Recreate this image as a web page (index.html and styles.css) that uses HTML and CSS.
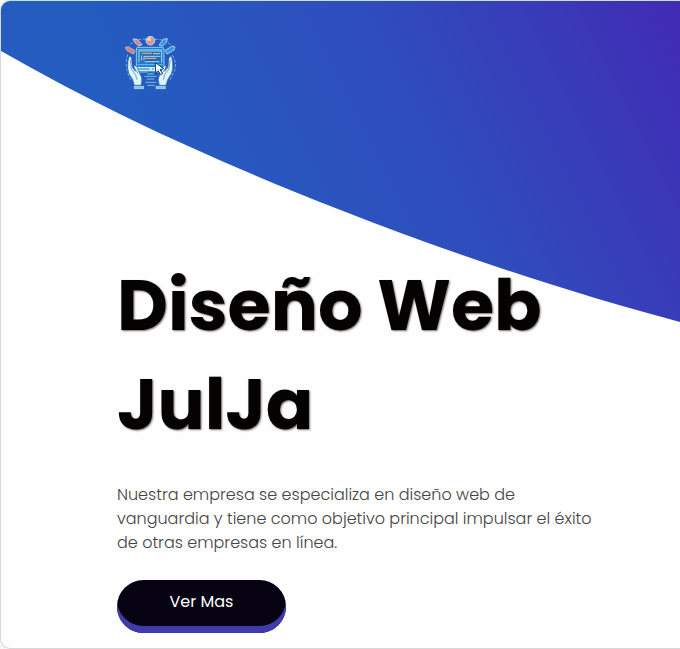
FILE: index.html
```html
<!DOCTYPE html>
<html lang="es">
<head>
<meta charset="utf-8">
<meta name="viewport" content="width=device-width, initial-scale=1">
<title>Diseño Web JulJa</title>
<link rel="stylesheet" href="styles.css">
</head>
<body>
<div class="page">
  <svg class="wave" viewBox="0 0 680 324" preserveAspectRatio="none" aria-hidden="true">
    <defs>
      <linearGradient id="sky" gradientUnits="userSpaceOnUse" x1="200" y1="240" x2="680" y2="0">
        <stop offset="0" stop-color="#245cc0"/>
        <stop offset="0.5" stop-color="#304bbc"/>
        <stop offset="1" stop-color="#412bb4"/>
      </linearGradient>
    </defs>
    <path fill="url(#sky)" d="M0 0H680V321C575 293 460 256 340 209C220 162 110 113 0 50Z"/>
  </svg>
  <header class="header">
    <a class="logo" href="#" aria-label="JulJa">
      <svg viewBox="42 33 156 162" aria-hidden="true">
        <g fill="none" stroke="#72b9e8" stroke-width="3" stroke-dasharray="9 5">
          <path d="M61 58Q86 38 108 43M134 43Q164 42 184 61M53 89Q44 113 54 146L62 164M187 91Q204 119 190 144L180 164"/>
        </g>
        <path fill="#d97b69" stroke="#cfdcea" stroke-width="2" d="M46 67L55 65L75 77L70 87L50 76Z"/>
        <path fill="#c98585" stroke="#bcdcf0" stroke-width="3" d="M69 42L82 43L96 59L86 63L75 53Z"/>
        <path fill="#3696df" stroke="#a5d5ef" stroke-width="3" d="M147 60L161 42L172 41L169 52L157 64ZM166 76L187 63L195 66L192 75L171 87Z"/>
        <circle cx="121" cy="47" r="13" fill="#dd9483" stroke="#b9dcf2" stroke-width="3"/>
        <path fill="#f7d4c4" d="M111 46Q113 36 123 37L121 49Z"/>
        <rect x="79" y="67" width="83" height="74" rx="5" fill="#267bc8" stroke="#8ccbee" stroke-width="3"/>
        <path stroke="#58b9ed" stroke-width="4" d="M82 74H159"/>
        <path fill="#2468b3" d="M90 79H151V110H90Z"/>
        <path fill="none" stroke="#a2def7" stroke-width="3" d="M87 112V78H155V113M95 91V107M102 106V94H151M104 110H148"/>
        <path stroke="#e0a57f" stroke-width="4" d="M95 85H126M105 100H139"/>
        <path stroke="#d9d4c8" stroke-width="3" d="M129 86H150"/>
        <path stroke="#51b9ef" stroke-width="4" d="M82 119H158"/>
        <path fill="#c9effc" d="M81 126H137V138H81Z"/>
        <path stroke="#266cb4" stroke-width="3" d="M84 132H119M126 132H131"/>
        <path fill="#48a7df" stroke="#123c88" stroke-width="2" d="M114 142H131L136 151H107Z"/>
        <path stroke="#7fc0e8" stroke-width="3" d="M103 154H140M110 162H133M106 172H139M112 181H134"/>
        <path fill="#dff5fc" stroke="#225e9e" stroke-width="2" d="M57 96Q63 89 65 102L67 126L76 139L71 123Q78 118 82 129L91 149Q99 160 93 181H73L68 164L56 145Q51 128 54 109ZM185 96Q179 90 176 103L174 127L164 139L169 123Q162 118 157 130L149 149Q141 162 148 181H168L173 164L185 145Q190 130 188 111Z"/>
        <path fill="none" stroke="#3379b8" stroke-width="2" d="M61 104L64 132L77 150L81 164M72 127L84 145M181 105L176 133L164 149L160 164M169 127L156 145"/>
        <path fill="#73c7ed" stroke="#c5e6f6" stroke-width="2" d="M73 184H101V191H73ZM138 184H166V191H138Z"/>
        <path fill="#fff" stroke="#123c83" stroke-width="3" d="M136 113L161 131L150 134L158 146L152 149L144 137L137 145Z"/>
      </svg>
    </a>
  </header>
  <main class="hero">
    <h1 class="title">Diseño Web JulJa</h1>
    <p class="intro">Nuestra empresa se especializa en diseño web de vanguardia y tiene como objetivo principal impulsar el éxito de otras empresas en línea.</p>
    <button class="more" type="button">Ver Mas</button>
  </main>
</div>
</body>
</html>
```
FILE: styles.css
```css
* {
  box-sizing: border-box;
}

body {
  margin: 0;
  background: #f4f8f9;
  font-family: Poppins, Inter, "Open Sans", sans-serif;
}

.page {
  position: relative;
  min-height: 100vh;
  overflow: hidden;
  border: 1px solid #d8d8d8;
  border-top-color: #c5e0ef;
  border-right: 0;
  border-radius: 10px 0 0 10px;
  background: #fefefe;
}

.wave {
  position: absolute;
  top: 0;
  left: 0;
  width: 100%;
  height: 324px;
}

.header {
  position: relative;
  padding: 35px 123px 0;
}

.logo {
  display: block;
  width: 52px;
}

.logo svg {
  display: block;
  width: 100%;
}

.hero {
  position: relative;
  padding: 166px 80px 12px 116px;
}

.title {
  max-width: 440px;
  margin: 0;
  color: #050202;
  font-size: 70px;
  font-weight: 700;
  line-height: 99px;
  text-shadow: 1px 1px 2px #776b6b;
}

.intro {
  max-width: 480px;
  margin: 29px 0 0;
  color: #444;
  font-size: 16px;
  font-weight: 300;
  line-height: 24px;
}

.more {
  display: block;
  width: 169px;
  height: 53px;
  margin-top: 25px;
  padding: 0 0 10px;
  border: 0;
  border-radius: 27px;
  background: #060212;
  box-shadow: inset 0 -7px #403aad;
  color: #fff;
  font: inherit;
  font-size: 16px;
  cursor: pointer;
}
```
